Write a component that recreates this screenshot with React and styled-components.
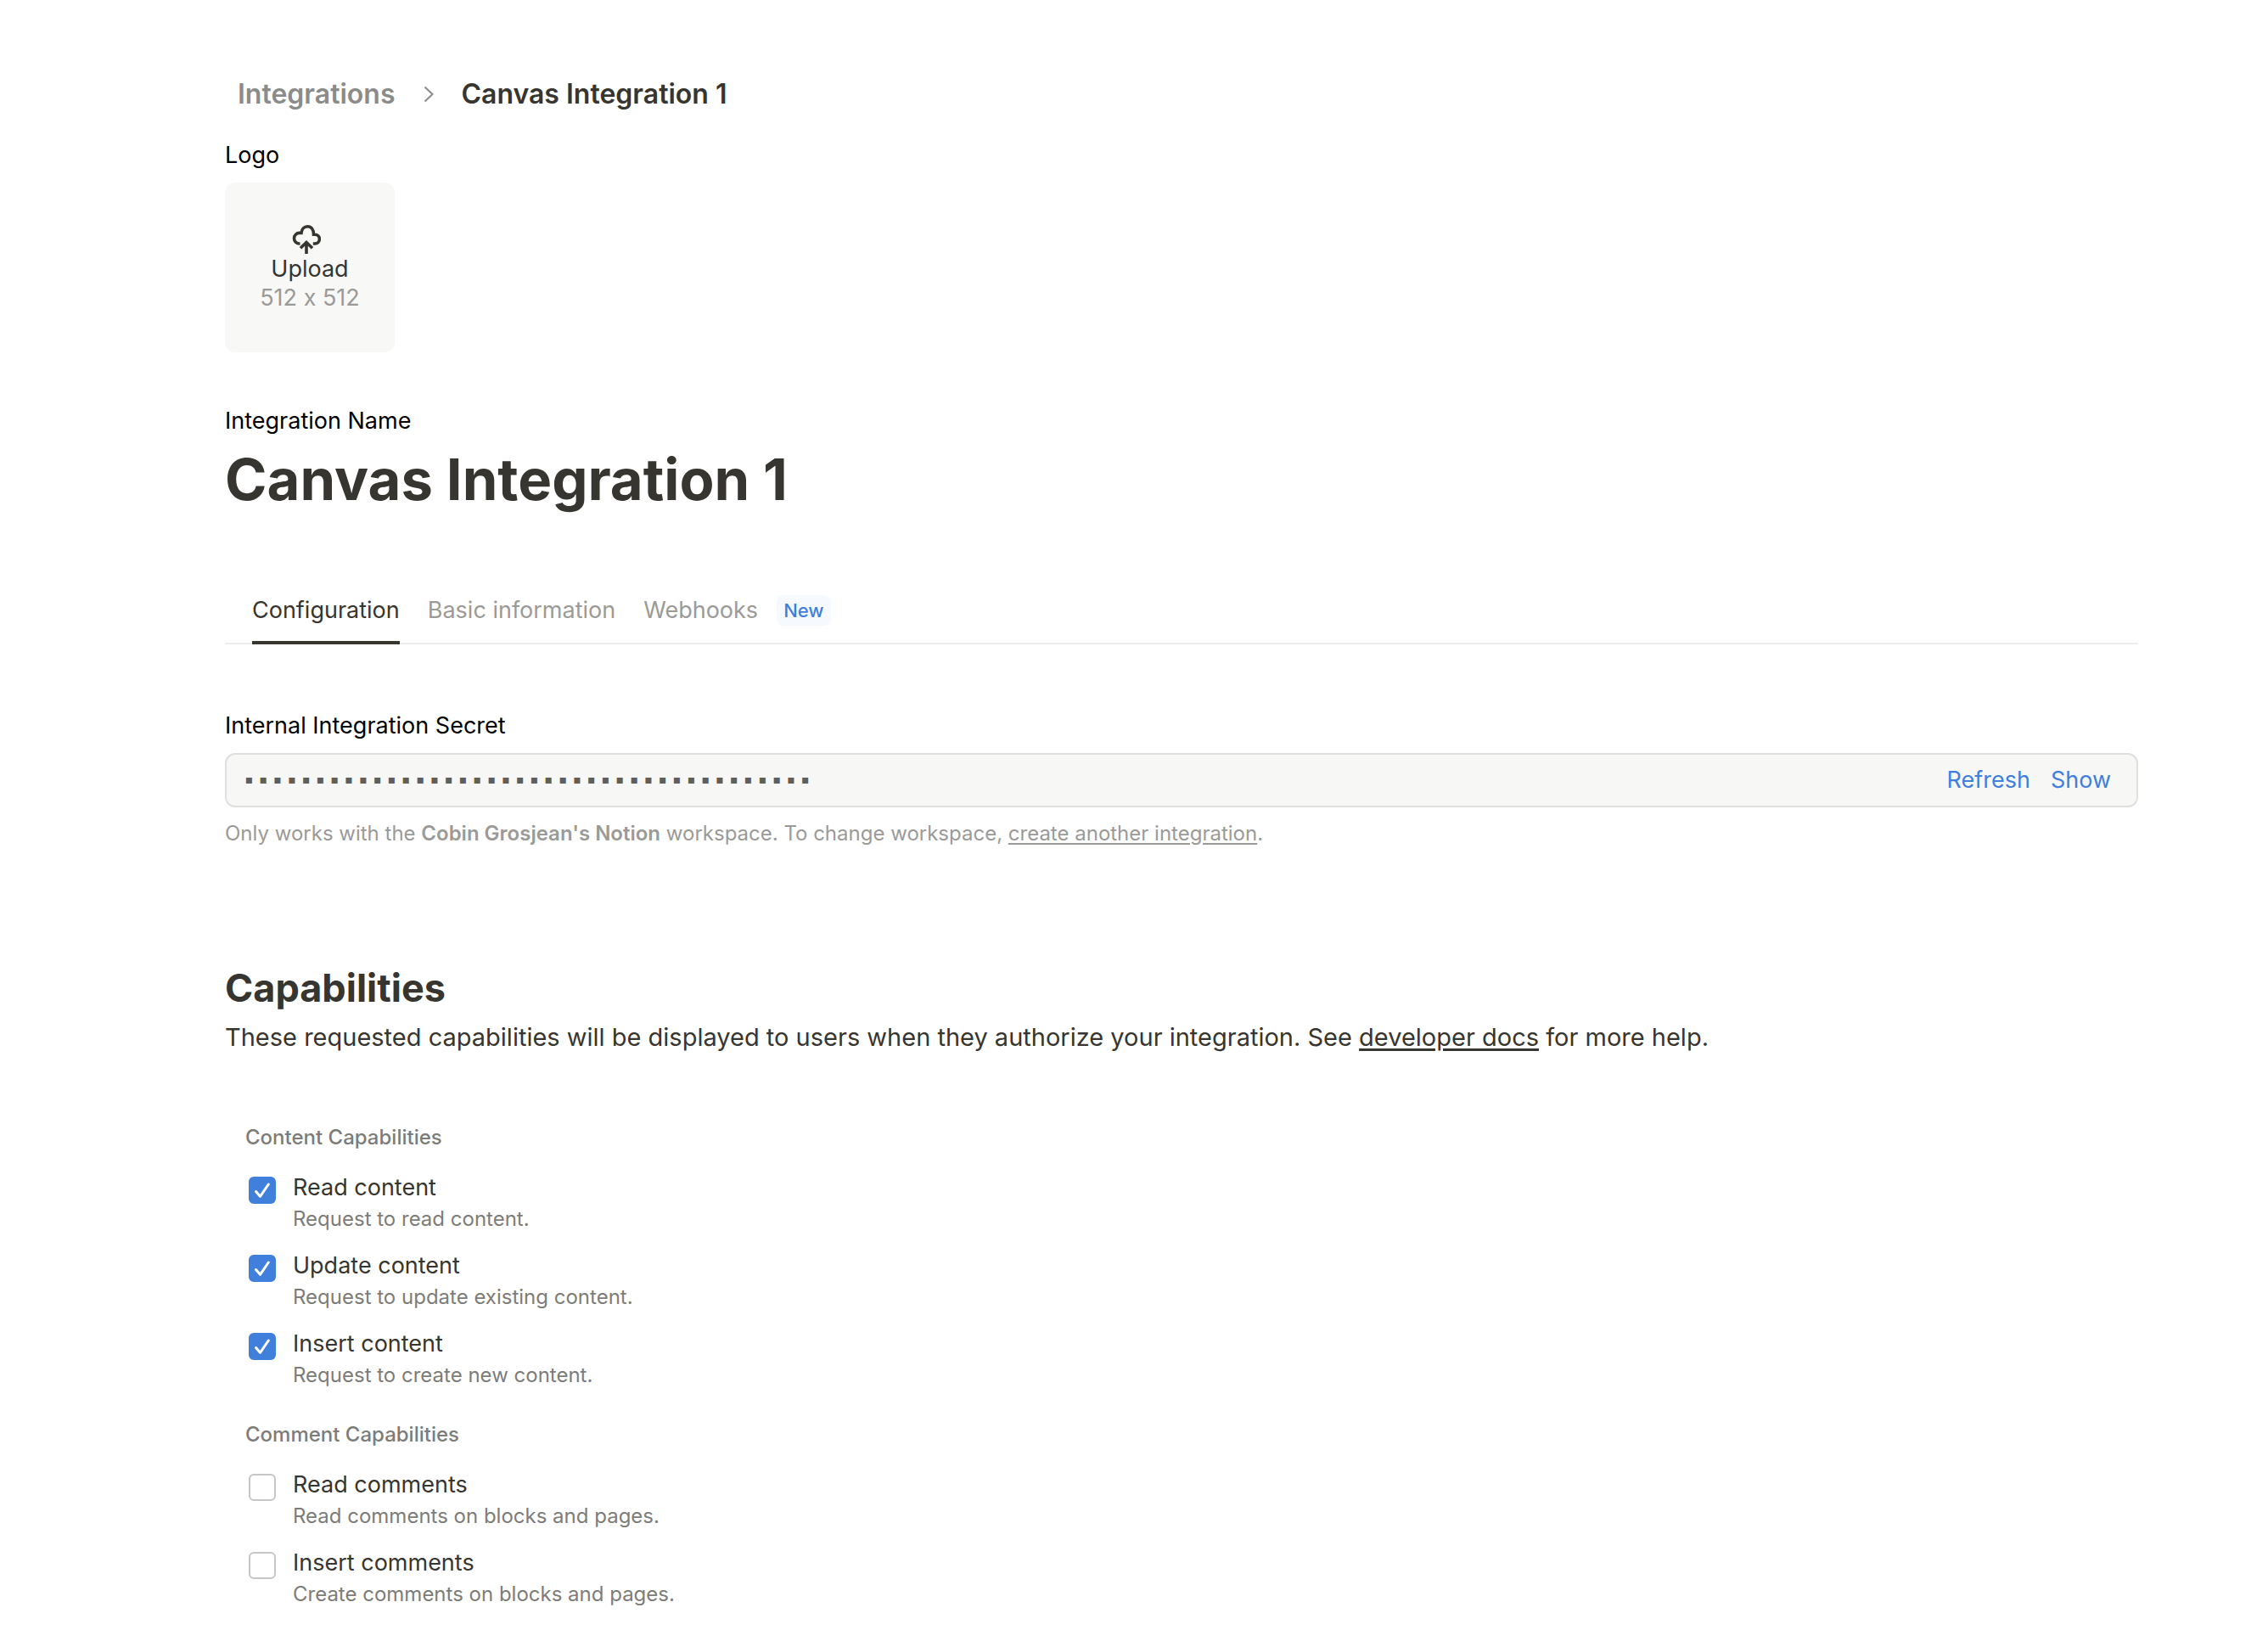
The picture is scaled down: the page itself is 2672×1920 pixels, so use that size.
import React, { useState } from "react";
import styled, { createGlobalStyle } from "styled-components";

const GlobalStyle = createGlobalStyle`
  *, *::before, *::after { box-sizing: border-box; }
  body {
    margin: 0;
    background: #fff;
    color: #37352f;
    font-family: Inter, "Liberation Sans", sans-serif;
    font-size: 27px;
    line-height: 34px;
    font-variant-ligatures: no-contextual;
  }
  button, input { font: inherit; color: inherit; }
  h1, h2, h3, p { margin: 0; }
`;

const Page = styled.main`
  padding: 91px 153px 24px 265px;
`;

const Breadcrumb = styled.nav`
  display: flex;
  align-items: center;
  padding-left: 15px;
  font-size: 32px;
  font-weight: 600;
  line-height: 40px;
`;

const Crumb = styled.a`
  color: #8b8b89;
  text-decoration: none;
`;

const CrumbArrow = styled.svg`
  width: 12px;
  height: 20px;
  margin: 0 32px 0 34px;
  fill: none;
  stroke: #8b8b89;
  stroke-width: 2;
`;

const Section = styled.section`
  display: flex;
  flex-direction: column;
  align-items: ${(p) => (p.$start ? "flex-start" : "stretch")};
  gap: ${(p) => p.$gap || 15}px;
  margin-top: ${(p) => p.$top}px;
`;

const FieldLabel = styled.label`
  color: #000;
`;

const UploadTile = styled.button`
  display: flex;
  flex-direction: column;
  align-items: center;
  justify-content: center;
  width: 200px;
  height: 200px;
  padding: 2px 0 0;
  border: 0;
  border-radius: 12px;
  background: #f8f8f7;
  cursor: pointer;
`;

const UploadIcon = styled.svg`
  width: 34px;
  height: 36px;
  margin-right: 8px;
  fill: none;
  stroke: #37352f;
  stroke-width: 3.6;
`;

const Muted = styled.span`
  color: #9b9a97;
`;

const Title = styled.h1`
  font-size: 67px;
  font-weight: 700;
  line-height: 84px;
`;

const Tabs = styled.div`
  display: flex;
  gap: 33px;
  height: 80px;
  margin-top: 72px;
  padding: 0 32px;
  box-shadow: inset 0 -2px #ededec;
`;

const Tab = styled.button`
  display: flex;
  align-items: center;
  gap: 22px;
  padding: 0;
  border: 0;
  background: none;
  color: ${(p) => (p.$active ? "#37352f" : "#9b9a97")};
  box-shadow: ${(p) => (p.$active ? "inset 0 -4px #37352f" : "none")};
  cursor: pointer;
`;

const Badge = styled.span`
  padding: 0 8px;
  border-radius: 8px;
  background: #f6faff;
  color: #3f7fdd;
  font-size: 22px;
  font-weight: 500;
  line-height: 36px;
`;

const SecretBox = styled.div`
  display: flex;
  align-items: center;
  gap: 24px;
  height: 64px;
  padding: 0 30px 0 18px;
  border: 2px solid #e0e0de;
  border-radius: 12px;
  background: #f7f7f5;
`;

const SecretInput = styled.input`
  flex: 1;
  min-width: 0;
  padding: 4px 0 0;
  border: 0;
  outline: 0;
  background: none;
  color: #5f5e5b;
  font-family: "Liberation Mono", monospace;
  font-size: 28px;
`;

const TextButton = styled.button`
  padding: 0;
  border: 0;
  background: none;
  color: #3f7fdd;
  cursor: pointer;
`;

const Help = styled.p`
  color: #9b9a97;
  font-size: 24px;
  line-height: 32px;

  strong { font-weight: 600; }
`;

const InlineLink = styled.a`
  color: inherit;
  text-decoration-line: underline;
  text-decoration-thickness: ${(p) => p.$line || 2}px;
  text-underline-offset: 3px;
`;

const Heading = styled.h2`
  font-size: 45px;
  font-weight: 700;
  line-height: 56px;
`;

const Lead = styled.p`
  font-size: 29px;
  line-height: 40px;
`;

const Group = styled.section`
  display: flex;
  flex-direction: column;
  gap: 22px;
  margin-top: ${(p) => p.$top}px;
  padding-left: 24px;
`;

const GroupTitle = styled.h3`
  margin-bottom: 4px;
  color: #7d7c78;
  font-size: 24px;
  font-weight: 500;
  line-height: 32px;
`;

const Option = styled.label`
  display: flex;
  align-items: flex-start;
  gap: 20px;
  padding-left: 4px;
  cursor: pointer;
`;

const CheckFrame = styled.span`
  display: grid;
  width: 32px;
  height: 32px;
  margin-top: 4px;
`;

const Checkbox = styled.input`
  grid-area: 1 / 1;
  width: 32px;
  height: 32px;
  margin: 0;
  appearance: none;
  border: 2px solid #c7c6c4;
  border-radius: 6px;
  background: #fff;

  &:checked {
    border-color: #407fdb;
    background: #407fdb;
  }
`;

const CheckMark = styled.svg`
  grid-area: 1 / 1;
  width: 32px;
  height: 32px;
  fill: none;
  stroke: #fff;
  stroke-width: 3;
  stroke-linecap: round;
  stroke-linejoin: round;
  pointer-events: none;
`;

const OptionText = styled.span`
  display: flex;
  flex-direction: column;
  gap: 4px;
`;

const OptionHint = styled.span`
  color: #7d7c78;
  font-size: 24px;
  line-height: 32px;
`;

const contentOptions = [
  { name: "Read content", hint: "Request to read content.", on: true },
  { name: "Update content", hint: "Request to update existing content.", on: true },
  { name: "Insert content", hint: "Request to create new content.", on: true },
];

const commentOptions = [
  { name: "Read comments", hint: "Read comments on blocks and pages.", on: false },
  { name: "Insert comments", hint: "Create comments on blocks and pages.", on: false },
];

function Capability({ name, hint, on }) {
  const [checked, setChecked] = useState(on);
  return (
    <Option>
      <CheckFrame>
        <Checkbox type="checkbox" checked={checked} onChange={(e) => setChecked(e.target.checked)} />
        {checked && (
          <CheckMark viewBox="0 0 32 32" aria-hidden="true">
            <path d="M8.500 17.500L13.500 23.300L23.300 9" />
          </CheckMark>
        )}
      </CheckFrame>
      <OptionText>
        <span>{name}</span>
        <OptionHint>{hint}</OptionHint>
      </OptionText>
    </Option>
  );
}

export default function App() {
  return (
    <>
      <GlobalStyle />
      <Page>
        <Breadcrumb aria-label="Breadcrumb">
          <Crumb href="#integrations">Integrations</Crumb>
          <CrumbArrow viewBox="0 0 12 20" aria-hidden="true">
            <path d="M1.500 1.500L10.500 10L1.500 18.500" />
          </CrumbArrow>
          <span>Canvas Integration 1</span>
        </Breadcrumb>

        <Section $top={35} $start>
          <FieldLabel htmlFor="logo">Logo</FieldLabel>
          <UploadTile id="logo" type="button">
            <UploadIcon viewBox="0 0 34 36" aria-hidden="true">
              <path d="M9.500 23H8.800A6.300 6.300 0 0 1 8.800 10.400H11C11.500 5.500 14.500 2.700 18.300 2.700C22.500 2.700 25.500 5.800 25.500 12.200H27A5.400 5.400 0 0 1 27 23H24.800" />
              <path d="M17 35V21.500M10 28.300L17 21.500L24 28.300" />
            </UploadIcon>
            <span>Upload</span>
            <Muted>512 x 512</Muted>
          </UploadTile>
        </Section>

        <Section $top={64} $gap={10}>
          <FieldLabel as="span">Integration Name</FieldLabel>
          <Title>Canvas Integration 1</Title>
        </Section>

        <Tabs role="tablist">
          <Tab role="tab" aria-selected="true" $active>Configuration</Tab>
          <Tab role="tab" aria-selected="false">Basic information</Tab>
          <Tab role="tab" aria-selected="false">
            Webhooks <Badge>New</Badge>
          </Tab>
        </Tabs>

        <Section $top={79}>
          <FieldLabel htmlFor="secret">Internal Integration Secret</FieldLabel>
          <SecretBox>
            <SecretInput id="secret" readOnly value={"▪".repeat(40)} />
            <TextButton type="button">Refresh</TextButton>
            <TextButton type="button">Show</TextButton>
          </SecretBox>
          <Help>
            Only works with the <strong>Cobin Grosjean's Notion</strong> workspace. To change workspace,{" "}
            <InlineLink href="#new">create another integration</InlineLink>.
          </Help>
        </Section>

        <Section $top={138} $gap={10}>
          <Heading>Capabilities</Heading>
          <Lead>
            These requested capabilities will be displayed to users when they authorize your integration. See{" "}
            <InlineLink href="#docs" $line={3}>developer docs</InlineLink> for more help.
          </Lead>
        </Section>

        <Group $top={82}>
          <GroupTitle>Content Capabilities</GroupTitle>
          {contentOptions.map((o) => <Capability key={o.name} {...o} />)}
        </Group>

        <Group $top={38}>
          <GroupTitle>Comment Capabilities</GroupTitle>
          {commentOptions.map((o) => <Capability key={o.name} {...o} />)}
        </Group>
      </Page>
    </>
  );
}
